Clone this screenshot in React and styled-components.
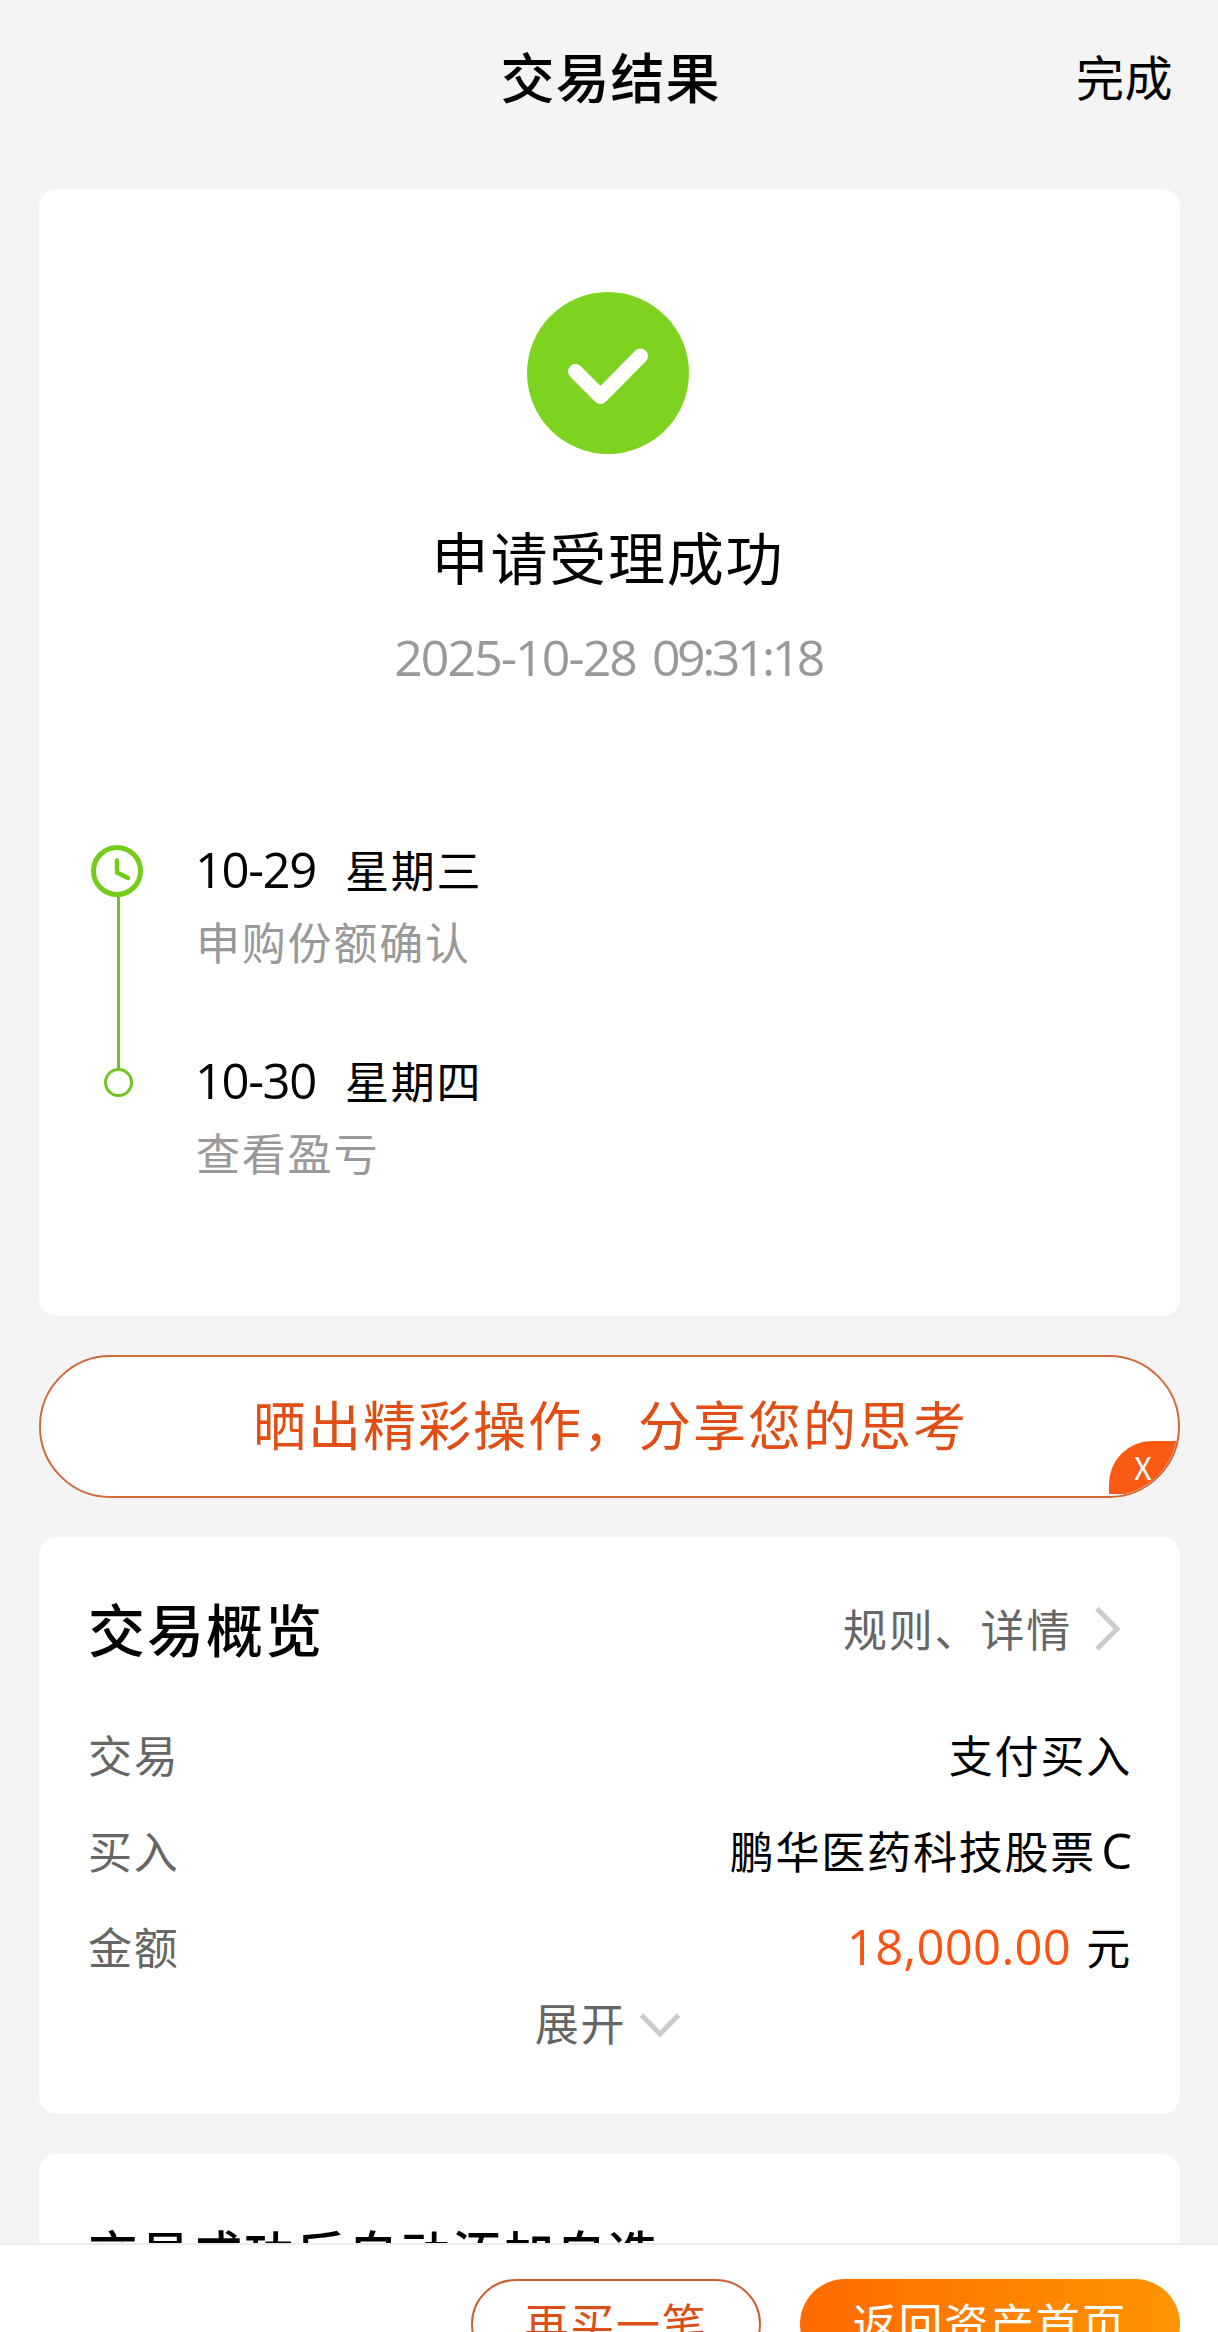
import styled, { createGlobalStyle } from "styled-components";

const GlobalStyle = createGlobalStyle`
  * {
    box-sizing: border-box;
  }
  body {
    margin: 0;
    background: #f4f4f4;
    font-family: "Noto Sans CJK SC", sans-serif;
    color: #000;
  }
`;

const Page = styled.div`
  width: 1218px;
  height: 2332px;
  display: flex;
  flex-direction: column;
  overflow: hidden;
`;

const Content = styled.div`
  height: 2243px;
  flex: none;
  overflow: hidden;
  padding: 0 38px 0 39px;
`;

const Header = styled.header`
  height: 189px;
  padding: 46px 7px 0 9px;
  display: grid;
  grid-template-columns: 1fr auto 1fr;
  line-height: 60px;
`;

const HeaderTitle = styled.h1`
  grid-column: 2;
  margin: 0;
  font-size: 54px;
  font-weight: 500;
  line-height: 60px;
  letter-spacing: 1px;
`;

const DoneLink = styled.span`
  justify-self: end;
  font-size: 48px;
  line-height: 58px;
  letter-spacing: 0.5px;
`;

const Card = styled.section`
  height: ${(props) => props.$height}px;
  padding: ${(props) => props.$padding};
  margin-bottom: ${(props) => props.$gap || 0}px;
  background: #fff;
  border-radius: 18px;
`;

const Result = styled.div`
  padding-right: 3px;
  display: flex;
  flex-direction: column;
  align-items: center;
`;

const ResultTitle = styled.h2`
  margin: 71px 0 0;
  font-size: 57px;
  font-weight: 400;
  line-height: 60px;
  letter-spacing: 1.8px;
`;

const Digits = styled.span`
  font-family: "Open Sans", "Noto Sans CJK SC", sans-serif;
  font-size: ${(props) => props.$size}px;
  letter-spacing: ${(props) => props.$spacing}px;
`;

const ResultTime = styled.div`
  margin-top: 42px;
  display: flex;
  gap: 16px;
  line-height: 60px;
  color: #999;
`;

const Timeline = styled.div`
  display: flex;
  margin: 152px 0 0 52px;
`;

const Rail = styled.div`
  width: 55px;
  padding-top: 6px;
  display: flex;
  flex-direction: column;
  align-items: center;
`;

const ClockIcon = styled.svg`
  align-self: flex-start;
  flex: none;
`;

const RailLine = styled.div`
  width: 3px;
  height: 171px;
  background: #72c422;
`;

const RailDot = styled.div`
  width: 29px;
  height: 29px;
  border: 3px solid #72c422;
  border-radius: 50%;
`;

const Steps = styled.div`
  margin-left: 50px;
`;

const Step = styled.div`
  height: 211px;
`;

const StepDate = styled.div`
  display: flex;
  margin-left: -1px;
  font-size: 44px;
  line-height: 60px;
  letter-spacing: 1.7px;
`;

const StepDay = styled.span`
  width: 150px;
`;

const StepText = styled.div`
  margin-top: 17px;
  font-size: 44px;
  line-height: 50px;
  letter-spacing: 1.8px;
  color: #999;
`;

const ShareBanner = styled.div`
  position: relative;
  height: 143px;
  margin-bottom: 39px;
  padding-left: 2px;
  display: flex;
  justify-content: center;
  background: #fff;
  border: 2px solid #d0693a;
  border-radius: 72px;
  overflow: hidden;
  font-size: 53px;
  line-height: 132px;
  letter-spacing: 2px;
  color: #e04e14;
`;

// sits on the corner of the banner and is clipped by its rounding
const CloseBadge = styled.span`
  position: absolute;
  right: 0;
  bottom: 2px;
  width: 69px;
  height: 53px;
  padding-left: 25px;
  background: #fa5a14;
  border-top-left-radius: 43px;
  font-size: 31px;
  font-weight: 400;
  line-height: 51px;
  letter-spacing: 0;
  color: #fff;
`;

const OverviewHead = styled.div`
  height: 60px;
  margin-bottom: 67px;
  display: flex;
  align-items: center;
`;

const SectionTitle = styled.h2`
  margin: 0;
  font-size: ${(props) => props.$size}px;
  font-weight: 500;
  line-height: 60px;
  letter-spacing: 2px;
`;

const DetailLink = styled.span`
  margin-left: auto;
  padding: 2px 10px 0 0;
  display: flex;
  align-items: center;
  gap: 22px;
  font-size: 44px;
  line-height: 60px;
  letter-spacing: 1.8px;
  color: #666;
`;

const Row = styled.div`
  height: 96px;
  display: flex;
  justify-content: space-between;
  font-size: 44px;
  line-height: 60px;
  letter-spacing: 1.8px;
`;

const RowLabel = styled.span`
  color: #666;
`;

const FundClass = styled(Digits)`
  margin-left: 5px;
`;

const Amount = styled(Digits)`
  margin-right: 15px;
  color: #fa5414;
`;

const Expand = styled.div`
  margin-top: -20px;
  padding-right: 4px;
  display: flex;
  justify-content: center;
  align-items: center;
  gap: 13px;
  font-size: 44px;
  line-height: 60px;
  letter-spacing: 1.8px;
  color: #666;
`;

const ExpandIcon = styled.svg`
  margin-top: 6px;
`;

const BottomBar = styled.footer`
  flex: 1;
  padding: 34px 38px 0 0;
  display: flex;
  justify-content: flex-end;
  gap: 39px;
  background: #fff;
  border-top: 2px solid #ececec;
`;

const Button = styled.button`
  flex: none;
  width: ${(props) => props.$width}px;
  height: 90px;
  padding: 0 0 4px;
  font-family: inherit;
  font-size: 44px;
  line-height: 80px;
  letter-spacing: 1.8px;
  border-radius: 45px;
  color: ${(props) => (props.$primary ? "#fff" : "#dc4f18")};
  border: ${(props) => (props.$primary ? "none" : "2px solid #cc6035")};
  background: ${(props) =>
    props.$primary ? "linear-gradient(90deg, #ff6a00, #ff9500)" : "#fff"};
`;

const steps = [
  { date: "10-29", day: "星期三", text: "申购份额确认" },
  { date: "10-30", day: "星期四", text: "查看盈亏" },
];

function App() {
  return (
    <Page>
      <GlobalStyle />
      <Content>
        <Header>
          <HeaderTitle>交易结果</HeaderTitle>
          <DoneLink>完成</DoneLink>
        </Header>

        <Card $height={1127} $padding="103px 0 0" $gap={39}>
          <Result>
            <svg width="162" height="162" viewBox="0 0 162 162">
              <circle cx="81" cy="81" r="81" fill="#7ed321" />
              <path
                d="M48.5 79.5L73.5 104.5L113.5 64"
                fill="none"
                stroke="#fff"
                strokeWidth="15"
                strokeLinecap="round"
                strokeLinejoin="round"
              />
            </svg>
            <ResultTitle>申请受理成功</ResultTitle>
            <ResultTime>
              <Digits $size={50} $spacing={-1.9}>
                2025-10-28
              </Digits>
              <Digits $size={50} $spacing={-3.5}>
                09:31:18
              </Digits>
            </ResultTime>
          </Result>
          <Timeline>
            <Rail>
              <ClockIcon width="52" height="52" viewBox="0 0 52 52">
                <g
                  fill="none"
                  stroke="#76cc1b"
                  strokeLinecap="round"
                  strokeLinejoin="round"
                >
                  <circle cx="26" cy="26" r="23.5" strokeWidth="5" />
                  <path d="M26 15.5V27.5L37 33" strokeWidth="4.5" />
                </g>
              </ClockIcon>
              <RailLine />
              <RailDot />
            </Rail>
            <Steps>
              {steps.map((step) => (
                <Step key={step.date}>
                  <StepDate>
                    <StepDay>
                      <Digits $size={49} $spacing={-1.4}>
                        {step.date}
                      </Digits>
                    </StepDay>
                    <span>{step.day}</span>
                  </StepDate>
                  <StepText>{step.text}</StepText>
                </Step>
              ))}
            </Steps>
          </Timeline>
        </Card>

        <ShareBanner>
          晒出精彩操作，分享您的思考
          <CloseBadge>X</CloseBadge>
        </ShareBanner>

        <Card $height={577} $padding="60px 48px 0 49px" $gap={40}>
          <OverviewHead>
            <SectionTitle $size={57}>交易概览</SectionTitle>
            <DetailLink>
              规则、详情
              <svg width="28" height="46" viewBox="0 0 28 46">
                <path
                  d="M3 3.5L23 24L3 44"
                  fill="none"
                  stroke="#ccc"
                  strokeWidth="5"
                />
              </svg>
            </DetailLink>
          </OverviewHead>
          <Row>
            <RowLabel>交易</RowLabel>
            <span>支付买入</span>
          </Row>
          <Row>
            <RowLabel>买入</RowLabel>
            <span>
              鹏华医药科技股票
              <FundClass $size={49} $spacing={0}>
                C
              </FundClass>
            </span>
          </Row>
          <Row>
            <RowLabel>金额</RowLabel>
            <span>
              <Amount $size={49} $spacing={0.3}>
                18,000.00
              </Amount>
              元
            </span>
          </Row>
          <Expand>
            展开
            <ExpandIcon width="42" height="26" viewBox="0 0 42 26">
              <path
                d="M2.5 3L21 22L39.5 3"
                fill="none"
                stroke="#ccc"
                strokeWidth="5"
              />
            </ExpandIcon>
          </Expand>
        </Card>

        <Card $height={300} $padding="67px 49px 0">
          <SectionTitle $size={50}>交易成功后自动添加自选</SectionTitle>
        </Card>
      </Content>

      <BottomBar>
        <Button $width={290}>再买一笔</Button>
        <Button $width={380} $primary>
          返回资产首页
        </Button>
      </BottomBar>
    </Page>
  );
}

export default App;
